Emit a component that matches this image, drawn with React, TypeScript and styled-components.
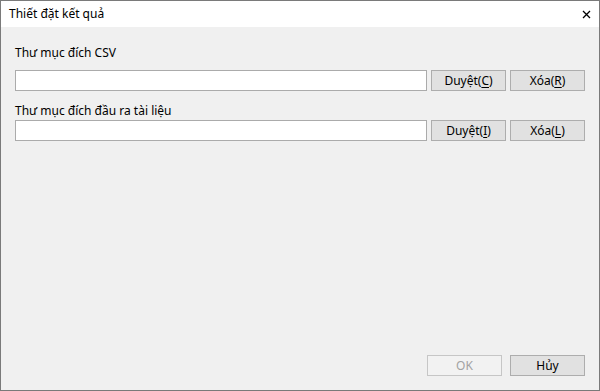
import styled, { createGlobalStyle } from "styled-components";

const GlobalStyle = createGlobalStyle`
    html, body {
        margin: 0;
        padding: 0;
        background: #ffffff;
    }
    * {
        box-sizing: border-box;
    }
`

const DialogWindow = styled.div`
    width: 600px;
    height: 391px;
    border: 1px solid #7a7a7a;
    background-color: #f0f0f0;
    display: flex;
    flex-direction: column;
    font-family: "Noto Sans", "Liberation Sans", sans-serif;
    font-size: 12px;
    line-height: 16px;
    color: #000000;
`

const TitleBar = styled.div`
    height: 26px;
    background-color: #ffffff;
    display: flex;
    align-items: center;
    justify-content: space-between;
    padding: 1px 5px 0 8px;
`

const TitleText = styled.span`
    color: #000000;
    margin-top: -1px;
`

const CloseButton = styled.button`
    width: 16px;
    height: 16px;
    padding: 0;
    border: none;
    background: transparent;
    display: flex;
    align-items: center;
    justify-content: center;
`

const DialogBody = styled.div`
    flex: 1;
    display: flex;
    flex-direction: column;
    padding: 18px 14px 14px 14px;
`

const FieldLabel = styled.label<{ $gap: number }>`
    display: block;
    margin-bottom: ${(p) => p.$gap}px;
`

const FieldRow = styled.div`
    display: flex;
    flex-direction: row;
    gap: 4px;
    margin-bottom: 12px;
`

const PathInput = styled.input`
    flex: 1;
    height: 21px;
    border: 1px solid #ababab;
    background-color: #ffffff;
    padding: 0 4px;
    font: inherit;
    outline: none;
`

const DialogButton = styled.button<{ $disabled?: boolean }>`
    width: 75px;
    height: 21px;
    padding: 0;
    font: inherit;
    line-height: 19px;
    text-align: center;
    color: ${(p) => (p.$disabled ? "#a2a2a2" : "#000000")};
    background-color: ${(p) => (p.$disabled ? "#f2f2f2" : "#e1e1e1")};
    border: 1px solid ${(p) => (p.$disabled ? "#c6c6c6" : "#adadad")};
`

const Footer = styled.div`
    margin-top: auto;
    display: flex;
    justify-content: flex-end;
    gap: 8px;
`

const AccessKey = styled.span`
    text-decoration: underline;
    text-underline-offset: 2px;
`

const CloseIcon = () => (
    <svg width="9" height="9" viewBox="0 0 9 9">
        <path d="M1 1 L8 8 M8 1 L1 8" stroke="#000" strokeWidth="1.3" />
    </svg>
)

interface FolderFieldProps {
    label: string
    labelGap: number
    browseKey: string
    clearKey: string
}

const FolderField: React.FC<FolderFieldProps> = ({ label, labelGap, browseKey, clearKey }) => (
    <>
        <FieldLabel $gap={labelGap}>{label}</FieldLabel>
        <FieldRow>
            <PathInput type="text" />
            <DialogButton type="button">
                Duyệt(<AccessKey>{browseKey}</AccessKey>)
            </DialogButton>
            <DialogButton type="button">
                Xóa(<AccessKey>{clearKey}</AccessKey>)
            </DialogButton>
        </FieldRow>
    </>
)

const App = () => {
    return (
        <>
            <GlobalStyle />
            <DialogWindow>
                <TitleBar>
                    <TitleText>Thiết đặt kết quả</TitleText>
                    <CloseButton type="button">
                        <CloseIcon />
                    </CloseButton>
                </TitleBar>
                <DialogBody>
                    <FolderField label="Thư mục đích CSV" labelGap={9} browseKey="C" clearKey="R" />
                    <FolderField label="Thư mục đích đầu ra tài liệu" labelGap={1} browseKey="I" clearKey="L" />
                    <Footer>
                        <DialogButton type="button" $disabled>OK</DialogButton>
                        <DialogButton type="button">Hủy</DialogButton>
                    </Footer>
                </DialogBody>
            </DialogWindow>
        </>
    )
}

export default App;
